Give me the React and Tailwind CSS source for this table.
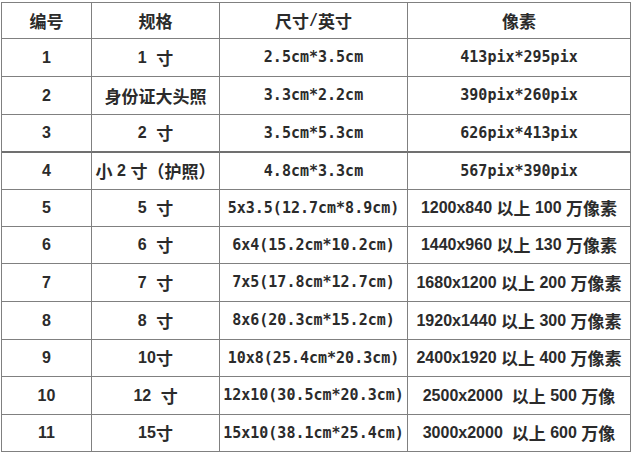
const rows = [
  { h: "h-[36px]", no: "编号", spec: "规格", size: "尺寸/英寸", px: "像素", head: true },
  { h: "h-[38px]", no: "1", spec: "1 寸", size: "2.5cm*3.5cm", px: "413pix*295pix", mono: true },
  { h: "h-[38px]", no: "2", spec: "身份证大头照", size: "3.3cm*2.2cm", px: "390pix*260pix", mono: true },
  { h: "h-[38px]", no: "3", spec: "2 寸", size: "3.5cm*5.3cm", px: "626pix*413pix", mono: true, thick: true },
  { h: "h-[37px]", no: "4", spec: "小 2 寸（护照）", size: "4.8cm*3.3cm", px: "567pix*390pix", mono: true, tight: true },
  { h: "h-[37px]", no: "5", spec: "5 寸", size: "5x3.5(12.7cm*8.9cm)", px: "1200x840 以上 100 万像素" },
  { h: "h-[37px]", no: "6", spec: "6 寸", size: "6x4(15.2cm*10.2cm)", px: "1440x960 以上 130 万像素" },
  { h: "h-[38px]", no: "7", spec: "7 寸", size: "7x5(17.8cm*12.7cm)", px: "1680x1200 以上 200 万像素" },
  { h: "h-[38px]", no: "8", spec: "8 寸", size: "8x6(20.3cm*15.2cm)", px: "1920x1440 以上 300 万像素" },
  { h: "h-[37px]", no: "9", spec: "10寸", size: "10x8(25.4cm*20.3cm)", px: "2400x1920 以上 400 万像素" },
  { h: "h-[38px]", no: "10", spec: "12 寸", size: "12x10(30.5cm*20.3cm)", px: "2500x2000  以上 500 万像" },
  { h: "h-[37px]", no: "11", spec: "15寸", size: "15x10(38.1cm*25.4cm)", px: "3000x2000  以上 600 万像" },
];

const cjk = /([\u3000-\u303f\u4e00-\u9fff\uff00-\uffef]+)/;

// split text so Chinese runs get the wider CJK face, the rest a latin face
function Txt({ text, latin }) {
  return text.split(cjk).filter(Boolean).map((part, i) =>
    cjk.test(part) ? (
      <span key={i} className="font-['Noto_Sans_CJK_SC',sans-serif] text-[17px] font-semibold">
        {part}
      </span>
    ) : (
      <span key={i} className={latin}>
        {part}
      </span>
    )
  );
}

const sans = "font-['Liberation_Sans',sans-serif] text-[16px] font-bold whitespace-pre";
const sansWide = "font-['Liberation_Sans',sans-serif] text-[16px] font-bold whitespace-pre [word-spacing:5px]";
const mono = "font-['DejaVu_Sans_Mono',monospace] text-[15px] font-bold whitespace-pre";

function Cell({ h, children, border }) {
  return (
    <div className={`${h} ${border} border-r border-[#808080] flex items-center justify-center whitespace-nowrap`}>
      {children}
    </div>
  );
}

export default function App() {
  return (
    <div className="w-[633px] h-[453px] bg-white pt-[2px] pl-[1px] text-[#2b2b2b]">
      <div className="grid grid-cols-[90px_128px_188px_223px] w-max border-l border-t border-[#808080]">
        {rows.map((r) => {
          const b = r.thick ? "border-b-2 border-b-[#707070]" : "border-b border-b-[#808080]";
          return [
            <Cell key={r.no + "a"} h={r.h} border={b}>
              <Txt text={r.no} latin={sans} />
            </Cell>,
            <Cell key={r.no + "b"} h={r.h} border={b}>
              <Txt text={r.spec} latin={r.tight ? sans : sansWide} />
            </Cell>,
            <Cell key={r.no + "c"} h={r.h} border={b}>
              <Txt text={r.size} latin={mono} />
            </Cell>,
            <Cell key={r.no + "d"} h={r.h} border={b}>
              <Txt text={r.px} latin={r.mono ? mono : sans} />
            </Cell>,
          ];
        })}
      </div>
    </div>
  );
}
